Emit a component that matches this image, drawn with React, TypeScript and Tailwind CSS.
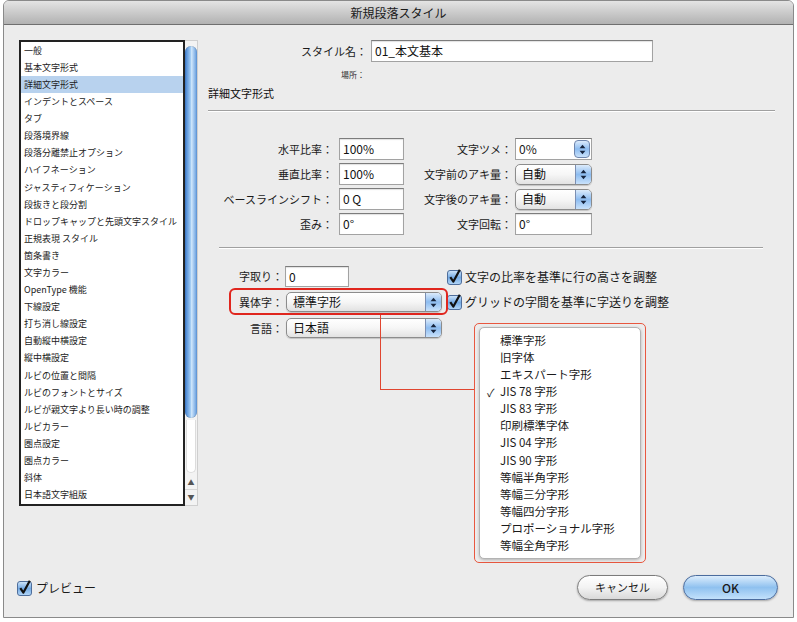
import React from "react";

const listItems = [
  "一般",
  "基本文字形式",
  "詳細文字形式",
  "インデントとスペース",
  "タブ",
  "段落境界線",
  "段落分離禁止オプション",
  "ハイフネーション",
  "ジャスティフィケーション",
  "段抜きと段分割",
  "ドロップキャップと先頭文字スタイル",
  "正規表現 スタイル",
  "箇条書き",
  "文字カラー",
  "OpenType 機能",
  "下線設定",
  "打ち消し線設定",
  "自動縦中横設定",
  "縦中横設定",
  "ルビの位置と間隔",
  "ルビのフォントとサイズ",
  "ルビが親文字より長い時の調整",
  "ルビカラー",
  "圏点設定",
  "圏点カラー",
  "斜体",
  "日本語文字組版",
];

const menuItems = [
  "標準字形",
  "旧字体",
  "エキスパート字形",
  "JIS 78 字形",
  "JIS 83 字形",
  "印刷標準字体",
  "JIS 04 字形",
  "JIS 90 字形",
  "等幅半角字形",
  "等幅三分字形",
  "等幅四分字形",
  "プロポーショナル字形",
  "等幅全角字形",
];

function Arrows() {
  return (
    <svg width="7" height="11" viewBox="0 0 7 11">
      <path d="M3.5 0.8 L6.4 4.3 L0.6 4.3 Z" fill="#16243d" />
      <path d="M3.5 10.2 L6.4 6.7 L0.6 6.7 Z" fill="#16243d" />
    </svg>
  );
}

function Popup({ text, className }: { text: string; className: string }) {
  return (
    <div
      className={`flex items-stretch rounded-[5px] border border-[#8c8c8c] bg-gradient-to-b from-white via-[#f6f6f6] to-[#e2e2e2] shadow-[0_1px_1px_rgba(0,0,0,0.18)] overflow-hidden ${className}`}
    >
      <div className="flex-1 flex items-center pl-[6px] text-[12px] text-[#111]">{text}</div>
      <div className="w-[16px] flex items-center justify-center border-l border-[#7c8fb2] bg-gradient-to-b from-[#dcebfb] via-[#8dbcf0] to-[#c9e2fb]">
        <Arrows />
      </div>
    </div>
  );
}

function Field({ value, className }: { value: string; className: string }) {
  return (
    <div
      className={`flex items-center bg-white border border-[#a2a2a2] border-t-[#7c7c7c] shadow-[inset_0_1px_1px_rgba(0,0,0,0.12)] pl-[3px] text-[12px] text-[#111] ${className}`}
    >
      {value}
    </div>
  );
}

function Check({ id }: { id: string }) {
  return (
    <svg width="15" height="16" viewBox="0 0 15 16" className="shrink-0">
      <defs>
        <linearGradient id={id} x1="0" y1="0" x2="0" y2="1">
          <stop offset="0" stopColor="#d2e7fb" />
          <stop offset="0.5" stopColor="#74aae4" />
          <stop offset="1" stopColor="#b5d8f8" />
        </linearGradient>
      </defs>
      <rect x="0.5" y="1.5" width="14" height="14" rx="2.5" fill={`url(#${id})`} stroke="#4f6e9b" />
      <path d="M3.3 8.2 L6.4 12.6 L12.8 0.8" fill="none" stroke="#111" strokeWidth="2.2" strokeLinejoin="round" />
    </svg>
  );
}

export default function App() {
  return (
    <div className="relative w-[797px] h-[622px] bg-white overflow-hidden font-['Noto_Sans_CJK_JP',sans-serif] text-[#1a1a1a]">
      <div className="ml-[3px] w-[791px] h-[618px] border border-[#8a8a8a] rounded-t-[6px] bg-[#ececec] flex flex-col overflow-hidden">
        {/* title bar */}
        <div className="h-[24px] shrink-0 border-b border-[#6f6f6f] bg-gradient-to-b from-[#e4e4e4] to-[#b2b2b2] flex items-center justify-center text-[12px] text-[#1a1a1a]">
          新規段落スタイル
        </div>

        <div className="flex flex-col pl-[15px] pr-[15px] pt-[15px]">
          <div className="flex">
            {/* list */}
            <div className="w-[166px] h-[466px] border-2 border-[#222] bg-white flex flex-col">
              {listItems.map((t, i) => (
                <div
                  key={t}
                  className={`h-[17.1px] shrink-0 flex items-center pl-[3px] text-[9px] text-[#222] whitespace-nowrap ${
                    i === 2 ? "bg-[#b8d2ee]" : ""
                  }`}
                >
                  {t}
                </div>
              ))}
            </div>
            {/* scrollbar */}
            <div className="w-[13px] h-[466px] bg-[#f3f3f3] border-r border-y border-[#cfcfcf] flex flex-col">
              <div className="mt-[5px] h-[372px] rounded-full bg-[linear-gradient(to_right,#3d7ccd,#9fcaf3_45%,#cfe6fb_55%,#5e98dc)] shadow-[inset_0_0_1px_rgba(0,0,0,0.4)]" />
              <div className="flex-1 mx-[1px] mt-[2px] mb-[2px] rounded-b-full bg-white border border-t-0 border-[#dcdcdc]" />
              <div className="h-[15px] flex items-center justify-center text-[7px] text-[#555] border-b border-[#d6d6d6]">▲</div>
              <div className="h-[15px] flex items-center justify-center text-[7px] text-[#555]">▼</div>
            </div>

            {/* right column */}
            <div className="ml-[10px] w-[570px] flex flex-col">
              <div className="flex h-[22px] items-center">
                <div className="w-[159px] text-right text-[11px]">スタイル名：</div>
                <Field value="01_本文基本" className="ml-[4px] w-[282px] h-[22px]" />
              </div>
              <div className="mt-[6px] h-[14px] flex items-center">
                <div className="w-[157px] text-right text-[8px] text-[#333]">場所：</div>
              </div>
              <div className="mt-[4px] text-[11px] leading-[14px] text-[#111]">詳細文字形式</div>
              <div className="mt-[10px] w-[567px] h-[2px] border-t border-[#a0a0a0] border-b border-b-white" />

              <div className="mt-[26px] flex flex-col gap-[3px]">
                <div className="flex items-center h-[22px]">
                  <div className="w-[125px] text-right text-[11px]">水平比率：</div>
                  <Field value="100%" className="ml-[6px] w-[65px] h-[22px]" />
                  <div className="w-[108px] text-right text-[11px]">文字ツメ：</div>
                  <div className="ml-[3px] w-[77px] h-[22px] flex bg-white border border-[#a2a2a2] border-t-[#7c7c7c]">
                    <div className="flex-1 flex items-center pl-[3px] text-[12px]">0%</div>
                    <div className="w-[16px] my-[1px] mr-[1px] rounded-[4px] border border-[#6f86ad] bg-gradient-to-b from-[#dcebfb] via-[#8dbcf0] to-[#c9e2fb] flex items-center justify-center">
                      <Arrows />
                    </div>
                  </div>
                </div>
                <div className="flex items-center h-[22px]">
                  <div className="w-[125px] text-right text-[11px]">垂直比率：</div>
                  <Field value="100%" className="ml-[6px] w-[65px] h-[22px]" />
                  <div className="w-[108px] text-right text-[11px]">文字前のアキ量：</div>
                  <Popup text="自動" className="ml-[3px] w-[77px] h-[21px]" />
                </div>
                <div className="flex items-center h-[22px]">
                  <div className="w-[125px] text-right text-[11px] whitespace-nowrap">ベースラインシフト：</div>
                  <Field value="0 Q" className="ml-[6px] w-[65px] h-[22px]" />
                  <div className="w-[108px] text-right text-[11px]">文字後のアキ量：</div>
                  <Popup text="自動" className="ml-[3px] w-[77px] h-[21px]" />
                </div>
                <div className="flex items-center h-[22px]">
                  <div className="w-[125px] text-right text-[11px]">歪み：</div>
                  <Field value="0°" className="ml-[6px] w-[65px] h-[22px]" />
                  <div className="w-[108px] text-right text-[11px]">文字回転：</div>
                  <Field value="0°" className="ml-[3px] w-[77px] h-[22px]" />
                </div>
              </div>

              <div className="mt-[12px] ml-[11px] w-[544px] h-[2px] border-t border-[#a0a0a0] border-b border-b-white" />

              <div className="mt-[17px] flex items-center h-[21px]">
                <div className="w-[75px] text-right text-[11px]">字取り：</div>
                <Field value="0" className="ml-[2px] w-[64px] h-[21px]" />
                <div className="ml-[98px] flex items-center">
                  <Check id="c1" />
                  <span className="ml-[3px] text-[12px] whitespace-nowrap">文字の比率を基準に行の高さを調整</span>
                </div>
              </div>
              <div className="mt-[5px] flex items-center h-[20px]">
                <div className="w-[75px] text-right text-[11px]">異体字：</div>
                <Popup text="標準字形" className="ml-[3px] w-[156px] h-[20px]" />
                <div className="ml-[5px] flex items-center">
                  <Check id="c2" />
                  <span className="ml-[3px] text-[12px] whitespace-nowrap">グリッドの字間を基準に字送りを調整</span>
                </div>
              </div>
              <div className="mt-[6px] flex items-center h-[20px]">
                <div className="w-[75px] text-right text-[11px]">言語：</div>
                <Popup text="日本語" className="ml-[3px] w-[156px] h-[20px]" />
              </div>
            </div>
          </div>

          {/* bottom row */}
          <div className="mt-[69px] h-[25px] flex items-center">
            <div className="ml-[-2px] flex items-center">
              <Check id="c3" />
              <span className="ml-[4px] text-[12px]">プレビュー</span>
            </div>
            <div className="ml-auto flex items-center gap-[15px]">
              <div className="w-[91px] h-[25px] rounded-full border border-[#7b7b7b] bg-gradient-to-b from-white via-[#f3f3f3] to-[#d9d9d9] shadow-[0_1px_2px_rgba(0,0,0,0.3)] flex items-center justify-center text-[11px]">
                キャンセル
              </div>
              <div className="w-[95px] h-[25px] rounded-full border border-[#4b6c9e] bg-gradient-to-b from-[#dcedfc] via-[#8fc1ef] to-[#c3e1fb] shadow-[0_1px_2px_rgba(0,0,0,0.3)] flex items-center justify-center text-[12px] font-medium">
                OK
              </div>
            </div>
          </div>
        </div>
      </div>

      {/* annotation: red box around 異体字 */}
      <div className="absolute left-[229px] top-[288px] w-[219px] h-[27px] border-2 border-[#e0261e] rounded-[6px]" />
      <div className="absolute left-[380px] top-[315px] w-px h-[75px] bg-[#e0452f]" />
      <div className="absolute left-[380px] top-[389px] w-[94px] h-px bg-[#e0452f]" />

      {/* dropdown menu */}
      <div className="absolute left-[474px] top-[323px] w-[172px] h-[240px] border border-[#e8573f] rounded-[5px] px-[4px] py-[3px]">
        <div className="h-full bg-white border border-[#b3b3b3] rounded-[5px] shadow-[0_1px_3px_rgba(0,0,0,0.25)] pt-[4px]">
          {menuItems.map((t) => (
            <div key={t} className="relative h-[17.1px] flex items-center pl-[20px] text-[11.5px] text-[#1a1a1a] whitespace-nowrap">
              {t === "JIS 78 字形" && <span className="absolute left-[7px] text-[11px]">✓</span>}
              {t}
            </div>
          ))}
        </div>
      </div>
    </div>
  );
}
